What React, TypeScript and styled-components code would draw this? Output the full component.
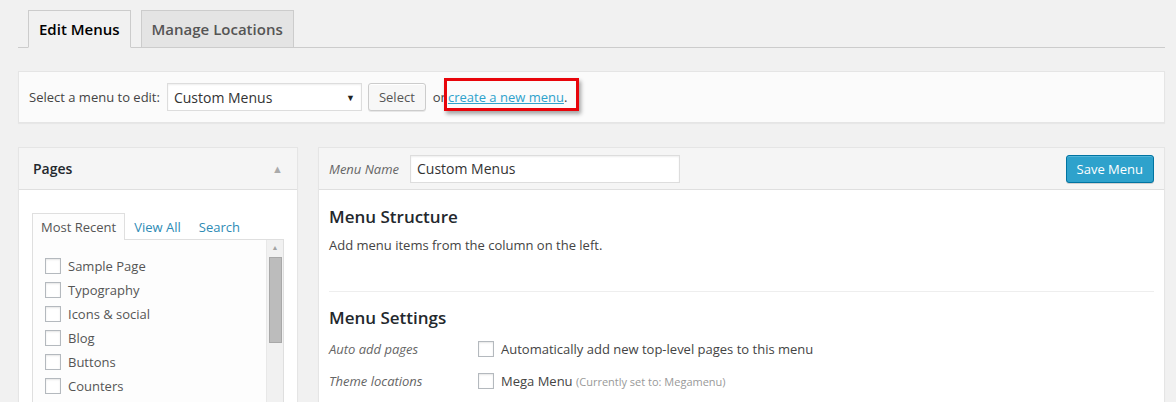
import React from "react";
import styled, { createGlobalStyle } from "styled-components";

const Global = createGlobalStyle`
  html, body { margin: 0; padding: 0; background: #f1f1f1; }
  body { font-family: "Open Sans", "Liberation Sans", sans-serif; font-size: 13px; color: #444; }
  * { box-sizing: border-box; }
`;

const Wrap = styled.div`
  padding: 10px 11px 0 18px;
  height: 402px;
  overflow: hidden;
`;

const TabBar = styled.div`
  display: flex;
  gap: 10px;
  padding-left: 10px;
  border-bottom: 1px solid #ccc;
  height: 38px;
`;

const Tab = styled.div<{ $active?: boolean }>`
  height: 38px;
  padding: 0 10px;
  display: flex;
  align-items: center;
  font-size: 15px;
  font-weight: 600;
  border: 1px solid #ccc;
  border-bottom: 1px solid ${(p) => (p.$active ? "#f1f1f1" : "#ccc")};
  background: ${(p) => (p.$active ? "#f1f1f1" : "#e4e4e4")};
  color: ${(p) => (p.$active ? "#000" : "#555")};
`;

const SelectBar = styled.div`
  margin-top: 23px;
  height: 52px;
  background: #fbfbfb;
  border: 1px solid #e5e5e5;
  box-shadow: 0 1px 1px rgba(0,0,0,0.04);
  display: flex;
  align-items: center;
  padding-left: 10px;
  font-size: 13px;
`;

const Label = styled.span`
  margin-right: 7px;
  color: #444;
`;

const Dropdown = styled.div`
  width: 195px;
  height: 28px;
  border: 1px solid #ddd;
  background: #fff;
  display: flex;
  align-items: center;
  justify-content: space-between;
  padding: 0 6px 0 6px;
  font-size: 14px;
  color: #333;
  box-shadow: inset 0 1px 2px rgba(0,0,0,0.07);
`;

const Caret = styled.span`
  font-size: 9px;
  color: #222;
`;

const Button = styled.div`
  margin-left: 6px;
  height: 28px;
  padding: 0 10px;
  display: flex;
  align-items: center;
  background: #f7f7f7;
  border: 1px solid #ccc;
  border-radius: 3px;
  color: #555;
  font-size: 13px;
  box-shadow: inset 0 1px 0 #fff, 0 1px 0 rgba(0,0,0,0.08);
`;

const Or = styled.span`
  margin-left: 7px;
  position: relative;
`;

const Link = styled.a`
  color: #2ea2cc;
  text-decoration: underline;
  margin-left: 2px;
`;

const Highlight = styled.span`
  position: absolute;
  left: 11px;
  top: -10px;
  width: 135px;
  height: 33px;
  border: 3px solid #e8050b;
  box-shadow: 2px 3px 4px rgba(0,0,0,0.35);
  pointer-events: none;
`;

const Columns = styled.div`
  margin-top: 24px;
  display: grid;
  grid-template-columns: 280px 1fr;
  gap: 20px;
`;

const Box = styled.div`
  background: #fff;
  border: 1px solid #e5e5e5;
  box-shadow: 0 1px 1px rgba(0,0,0,0.04);
  height: 300px;
`;

const BoxHead = styled.div`
  height: 42px;
  background: #f5f5f5;
  border-bottom: 1px solid #dfdfdf;
  display: flex;
  align-items: center;
  justify-content: space-between;
  padding: 0 14px 0 14px;
`;

const BoxTitle = styled.span`
  font-size: 14px;
  font-weight: 600;
  color: #23282d;
`;

const Arrow = styled.span`
  font-size: 11px;
  color: #aaa;
`;

const LeftBody = styled.div`
  padding: 23px 13px 0 13px;
`;

const MiniTabs = styled.div`
  display: flex;
  align-items: flex-end;
  height: 26px;
`;

const MiniTab = styled.div<{ $active?: boolean }>`
  padding: 0 8px;
  display: flex;
  align-items: center;
  font-size: 13px;
  color: ${(p) => (p.$active ? "#555" : "#2e8bb5")};
  border: 1px solid ${(p) => (p.$active ? "#dfdfdf" : "transparent")};
  border-bottom: none;
  background: ${(p) => (p.$active ? "#fdfdfd" : "transparent")};
  position: relative;
  z-index: 1;
  margin-bottom: -1px;
  height: 27px;
`;

const TabPanel = styled.div`
  border: 1px solid #dfdfdf;
  background: #fdfdfd;
  height: 200px;
  display: flex;
`;

const List = styled.div`
  flex: 1;
  padding: 18px 0 0 12px;
  display: flex;
  flex-direction: column;
  gap: 8px;
`;

const Item = styled.label`
  display: flex;
  align-items: center;
  gap: 7px;
  font-size: 13px;
  color: #555;
  height: 16px;
`;

const Check = styled.span`
  width: 16px;
  height: 16px;
  border: 1px solid #b4b9be;
  background: #fff;
  box-shadow: inset 0 1px 2px rgba(0,0,0,0.1);
  flex: none;
`;

const Scrollbar = styled.div`
  width: 17px;
  background: #f1f1f1;
  border-left: 1px solid #e8e8e8;
  display: flex;
  flex-direction: column;
  align-items: center;
  padding-top: 3px;
`;

const ScrollArrow = styled.span`
  font-size: 7px;
  color: #a3a3a3;
  height: 14px;
  line-height: 10px;
`;

const Thumb = styled.div`
  width: 13px;
  height: 86px;
  background: #bcbcbc;
  border: 1px solid #a8a8a8;
`;

const NameLabel = styled.span`
  font-style: italic;
  color: #666;
  font-size: 13px;
  margin-right: 11px;
`;

const NameInput = styled.div`
  width: 270px;
  height: 28px;
  border: 1px solid #ddd;
  background: #fff;
  display: flex;
  align-items: center;
  padding-left: 6px;
  font-size: 14px;
  color: #333;
  box-shadow: inset 0 1px 2px rgba(0,0,0,0.07);
`;

const HeadLeft = styled.div`
  display: flex;
  align-items: center;
`;

const Primary = styled.div`
  height: 28px;
  padding: 0 10px;
  display: flex;
  align-items: center;
  background: #2ea2cc;
  border: 1px solid #0074a2;
  border-radius: 3px;
  color: #fff;
  font-size: 13px;
  box-shadow: inset 0 1px 0 rgba(120,200,230,0.5), 0 1px 0 rgba(0,0,0,0.15);
`;

const RightHead = styled(BoxHead)`
  padding: 0 10px 0 10px;
`;

const RightBody = styled.div`
  padding: 15px 10px 0 10px;
`;

const H3 = styled.h3`
  margin: 0;
  font-size: 17px;
  font-weight: 600;
  color: #23282d;
  line-height: 24px;
`;

const P = styled.p`
  margin: 6px 0 0;
  font-size: 13px;
  line-height: 20px;
  color: #444;
`;

const Divider = styled.hr`
  border: none;
  border-top: 1px solid #eee;
  margin: 36px 0 14px;
`;

const Settings = styled.div`
  margin-top: 3px;
`;

const SettingRow = styled.div`
  display: grid;
  grid-template-columns: 149px 1fr;
  align-items: center;
  height: 32px;
`;

const SettingLabel = styled.span`
  font-style: italic;
  color: #666;
  font-size: 13px;
`;

const SettingValue = styled.span`
  display: flex;
  align-items: center;
  gap: 7px;
  font-size: 13px;
  color: #444;
`;

const Note = styled.span`
  font-size: 11px;
  color: #999;
`;

const pages = ["Sample Page", "Typography", "Icons & social", "Blog", "Buttons", "Counters"];

export default function App() {
  return (
    <>
      <Global />
      <Wrap>
        <TabBar>
          <Tab $active>Edit Menus</Tab>
          <Tab>Manage Locations</Tab>
        </TabBar>
        <SelectBar>
          <Label>Select a menu to edit:</Label>
          <Dropdown>
            Custom Menus <Caret>▼</Caret>
          </Dropdown>
          <Button>Select</Button>
          <Or>
            or<Link href="#">create a new menu</Link>.
            <Highlight />
          </Or>
        </SelectBar>
        <Columns>
          <Box>
            <BoxHead>
              <BoxTitle>Pages</BoxTitle>
              <Arrow>▲</Arrow>
            </BoxHead>
            <LeftBody>
              <MiniTabs>
                <MiniTab $active>Most Recent</MiniTab>
                <MiniTab>View All</MiniTab>
                <MiniTab>Search</MiniTab>
              </MiniTabs>
              <TabPanel>
                <List>
                  {pages.map((p) => (
                    <Item key={p}>
                      <Check />
                      {p}
                    </Item>
                  ))}
                </List>
                <Scrollbar>
                  <ScrollArrow>▲</ScrollArrow>
                  <Thumb />
                </Scrollbar>
              </TabPanel>
            </LeftBody>
          </Box>
          <Box>
            <RightHead>
              <HeadLeft>
                <NameLabel>Menu Name</NameLabel>
                <NameInput>Custom Menus</NameInput>
              </HeadLeft>
              <Primary>Save Menu</Primary>
            </RightHead>
            <RightBody>
              <H3>Menu Structure</H3>
              <P>Add menu items from the column on the left.</P>
              <Divider />
              <H3>Menu Settings</H3>
              <Settings>
                <SettingRow>
                  <SettingLabel>Auto add pages</SettingLabel>
                  <SettingValue>
                    <Check />
                    Automatically add new top-level pages to this menu
                  </SettingValue>
                </SettingRow>
                <SettingRow>
                  <SettingLabel>Theme locations</SettingLabel>
                  <SettingValue>
                    <Check />
                    <span>
                      Mega Menu <Note>(Currently set to: Megamenu)</Note>
                    </span>
                  </SettingValue>
                </SettingRow>
              </Settings>
            </RightBody>
          </Box>
        </Columns>
      </Wrap>
    </>
  );
}
